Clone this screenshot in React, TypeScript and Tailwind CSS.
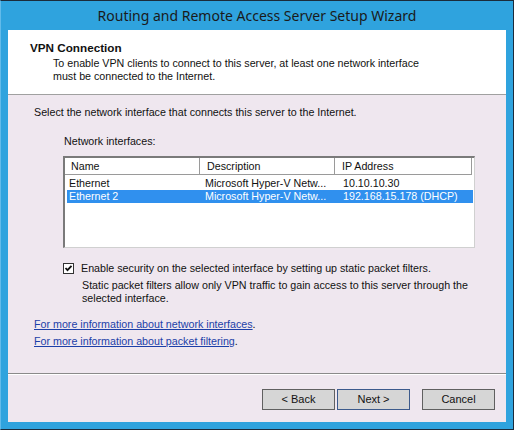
import React from "react";

const F = { fontFamily: '"Liberation Sans", Arial, sans-serif' };

function Check() {
  return (
    <div className="w-[11px] h-[11px] border border-[#333] bg-white flex items-center justify-center shrink-0">
      <svg width="9" height="9" viewBox="0 0 9 9">
        <path d="M1.5 4 L3.5 6.2 L7.5 1.8" stroke="#111" strokeWidth="1.8" fill="none" />
      </svg>
    </div>
  );
}

function Btn({ children, def }: { children: React.ReactNode; def?: boolean }) {
  return (
    <div
      className={`w-[73px] h-[21px] flex items-center justify-center bg-[#d6d6d6] border text-[11px] text-[#111] ${
        def ? "border-[#3c5a8c]" : "border-[#606060]"
      }`}
    >
      {children}
    </div>
  );
}

export default function App() {
  return (
    <div className="w-[514px] h-[430px] bg-[#2fa3de] border border-[#1b2b3b] border-l-[#62bbea] flex flex-col text-[#111]" style={F}>
      <div className="h-[29px] flex items-center justify-center text-[14px] text-[#1a1a1a]" style={{ fontFamily: '"Segoe UI", "Noto Sans", sans-serif' }}>
        Routing and Remote Access Server Setup Wizard
      </div>
      <div className="mx-[7px] flex-1 mb-[7px] flex flex-col bg-[#efe7ef] text-[10.7px]">
        <div className="h-[65px] bg-white border-b border-[#a0a0a0] pt-[11px] pl-[22px]">
          <div className="text-[11.7px] font-bold leading-[13px]">VPN Connection</div>
          <div className="pl-[23px] mt-[3px] leading-[13px]">
            To enable VPN clients to connect to this server, at least one network interface
            <br />
            must be connected to the Internet.
          </div>
        </div>
        <div className="h-[279px] pt-[11px] pl-[26px] leading-[13px] border-b border-[#8a8a8a]">
          <div>Select the network interface that connects this server to the Internet.</div>
          <div className="ml-[30px] mt-[16px]">Network interfaces:</div>
          <div className="ml-[29px] mt-[8px] w-[412px] h-[92px] bg-white border-t-2 border-l-2 border-t-[#7a7a7a] border-l-[#7a7a7a] border-b border-r border-b-[#d0d0d0] border-r-[#d0d0d0]">
            <div className="flex h-[17px]">
              <div className="w-[135px] border-r border-b border-[#9a9a9a] pl-[6px] flex items-center">Name</div>
              <div className="w-[135px] border-r border-b border-[#9a9a9a] pl-[7px] flex items-center">Description</div>
              <div className="w-[137px] border-r border-b border-[#9a9a9a] pl-[7px] flex items-center">IP Address</div>
            </div>
            <div className="flex h-[14px] mt-[1px] ml-[2px] w-[406px] items-center">
              <div className="w-[138px] pl-[2px]">Ethernet</div>
              <div className="w-[136px]">Microsoft Hyper-V Netw...</div>
              <div className="pl-[2px]">10.10.10.30</div>
            </div>
            <div className="flex h-[13px] ml-[2px] w-[406px] items-center bg-[#3090ee] text-white">
              <div className="w-[138px] pl-[2px]">Ethernet 2</div>
              <div className="w-[136px]">Microsoft Hyper-V Netw...</div>
              <div className="pl-[2px]">192.168.15.178 (DHCP)</div>
            </div>
          </div>
          <div className="ml-[29px] mt-[14px] flex items-center gap-[7px]">
            <Check />
            <div>Enable security on the selected interface by setting up static packet filters.</div>
          </div>
          <div className="ml-[48px] mt-[4px]">
            Static packet filters allow only VPN traffic to gain access to this server through the
            <br />
            selected interface.
          </div>
          <div className="mt-[13px]">
            <span className="text-[#1c3fa8] underline">For more information about network interfaces</span>.
          </div>
          <div className="mt-[4px]">
            <span className="text-[#1c3fa8] underline">For more information about packet filtering</span>.
          </div>
        </div>
        <div className="flex-1 border-t border-white flex justify-end pt-[14px] pr-[11px]">
          <div className="flex">
            <Btn>&lt; Back</Btn>
            <div className="ml-[2px]">
              <Btn def>Next &gt;</Btn>
            </div>
            <div className="ml-[12px]">
              <Btn>Cancel</Btn>
            </div>
          </div>
        </div>
      </div>
    </div>
  );
}
